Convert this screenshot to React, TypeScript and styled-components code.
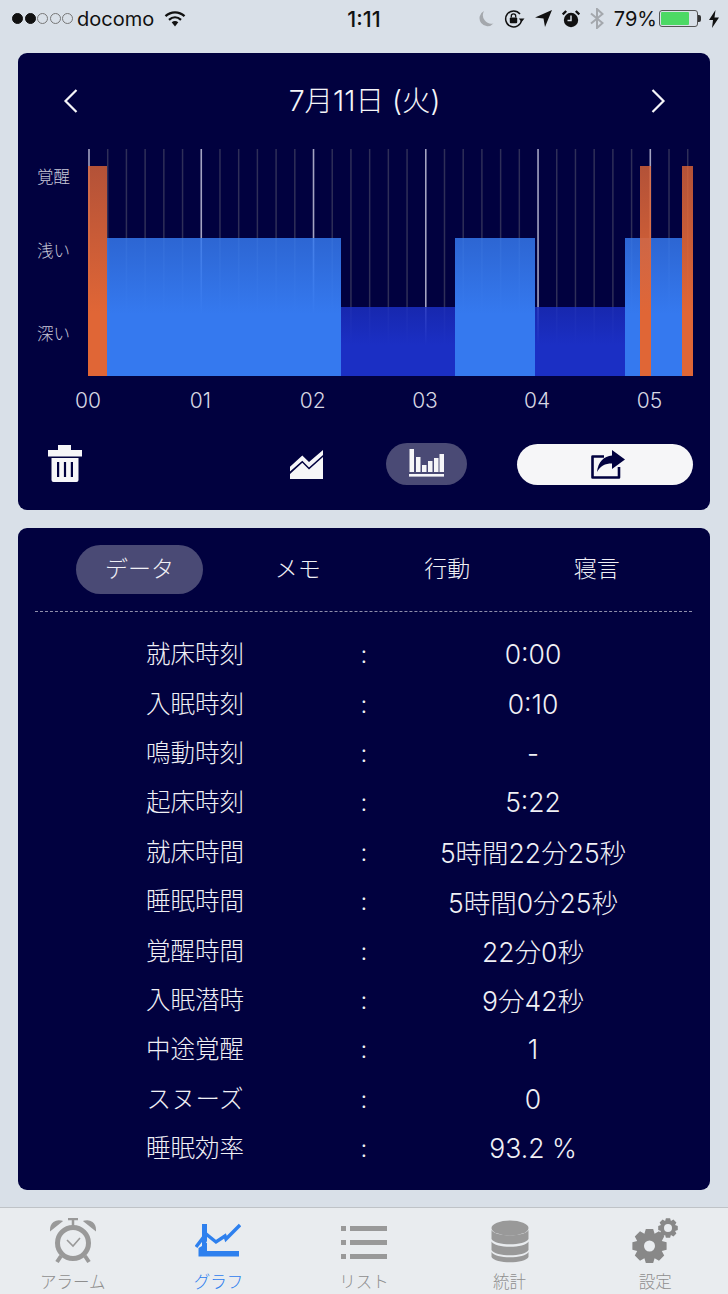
import React from 'react'
import styled, { createGlobalStyle } from 'styled-components'

const FONT = `Inter, "Noto Sans CJK JP", sans-serif`

const HOUR_X = [88, 200.3, 312.6, 425, 537, 649.5]
const STEP = 18.71

const SEGMENTS = [
  { x0: 107, x1: 341, stage: 'light' },
  { x0: 341, x1: 455, stage: 'deep' },
  { x0: 455, x1: 535, stage: 'light' },
  { x0: 535, x1: 625, stage: 'deep' },
  { x0: 625, x1: 682, stage: 'light' },
  { x0: 88, x1: 107, stage: 'awake' },
  { x0: 640, x1: 651, stage: 'awake' },
  { x0: 682, x1: 693, stage: 'awake' },
]

const STAGE_TOP: Record<string, number> = { awake: 166, light: 238, deep: 307 }

const ROWS = [
  ['就床時刻', '0:00'],
  ['入眠時刻', '0:10'],
  ['鳴動時刻', '-'],
  ['起床時刻', '5:22'],
  ['就床時間', '5時間22分25秒'],
  ['睡眠時間', '5時間0分25秒'],
  ['覚醒時間', '22分0秒'],
  ['入眠潜時', '9分42秒'],
  ['中途覚醒', '1'],
  ['スヌーズ', '0'],
  ['睡眠効率', '93.2 %'],
]

const gearPath = (cx: number, cy: number, r: number, teeth: number) => {
  const pts: string[] = []
  const outer = r
  const inner = r * 0.76
  const slice = (Math.PI * 2) / teeth
  for (let i = 0; i < teeth; i++) {
    const a = i * slice - Math.PI / 2
    const offsets: [number, number][] = [
      [-0.5, inner],
      [-0.27, outer],
      [0.27, outer],
      [0.5, inner],
    ]
    offsets.forEach(([o, rad]) => {
      const t = a + o * slice
      pts.push(`${(cx + Math.cos(t) * rad).toFixed(2)} ${(cy + Math.sin(t) * rad).toFixed(2)}`)
    })
  }
  return `M${pts.join('L')}Z`
}

const SleepChart = () => {
  const ticks = Array.from({ length: 33 }, (_, i) => i)
  return (
    <ChartSvg viewBox="18 140 692 280">
      <defs>
        <linearGradient id="light" x1="0" y1="0" x2="0" y2="1">
          <stop offset="0" stopColor="#3579ef" stopOpacity="0.84" />
          <stop offset="0.55" stopColor="#3579ef" />
        </linearGradient>
        <linearGradient id="deep" x1="0" y1="0" x2="0" y2="1">
          <stop offset="0" stopColor="#1b2fc4" stopOpacity="0.84" />
          <stop offset="0.55" stopColor="#1b2fc4" />
        </linearGradient>
        <linearGradient id="awake" x1="0" y1="0" x2="0" y2="1">
          <stop offset="0" stopColor="#e06636" stopOpacity="0.8" />
          <stop offset="0.7" stopColor="#e06636" />
        </linearGradient>
      </defs>
      {ticks.map(i => {
        const x = 89 + i * STEP
        const major = i % 6 === 0
        return (
          <line
            key={i}
            x1={x}
            x2={x}
            y1={149}
            y2={376}
            stroke={major ? '#a4a4c2' : '#2f2f58'}
            strokeWidth={major ? 1.6 : 1.5}
          />
        )
      })}
      {SEGMENTS.map(s => (
        <rect
          key={s.x0}
          x={s.x0}
          y={STAGE_TOP[s.stage]}
          width={s.x1 - s.x0}
          height={376 - STAGE_TOP[s.stage]}
          fill={`url(#${s.stage})`}
        />
      ))}
      <ChartLabel x={53.5} y={183}>覚醒</ChartLabel>
      <ChartLabel x={53.5} y={257}>浅い</ChartLabel>
      <ChartLabel x={53.5} y={340}>深い</ChartLabel>
      {HOUR_X.map((x, i) => (
        <HourLabel key={x} x={x} y={408}>{`0${i}`}</HourLabel>
      ))}
    </ChartSvg>
  )
}

const App = () => {
  return (
    <Page>
      <GlobalStyle />

      {/* Status bar */}
      <StatusBar>
        <StatusLeft>
          <Signal>
            {[true, true, false, false, false].map((on, i) => (
              <Dot key={i} $on={on} />
            ))}
          </Signal>
          <Carrier>docomo</Carrier>
          <svg width="22" height="17" viewBox="0 0 22 17">
            <path d="M1.5 6.2C7 1 15 1 20.5 6.2" fill="none" stroke="#111" strokeWidth="2.3" />
            <path d="M5 9.8C8.6 6.6 13.4 6.6 17 9.8" fill="none" stroke="#111" strokeWidth="2.3" />
            <path d="M7.7 12.3C9.7 10.6 12.3 10.6 14.3 12.3L11 16.5Z" fill="#111" />
          </svg>
        </StatusLeft>
        <Clock>1:11</Clock>
        <StatusRight>
          <svg width="17" height="18" viewBox="0 0 17 18">
            <path d="M7 1A8 8 0 1 0 16.5 13.5A8.6 8.6 0 0 1 7 1Z" fill="#a4a8ad" />
          </svg>
          <svg width="21" height="20" viewBox="0 0 21 20">
            <path d="M17.6 11A8 8 0 1 1 16 5" fill="none" stroke="#111" strokeWidth="1.5" />
            <path d="M20.5 9.5L17.6 13L14.8 9.5Z" fill="#111" />
            <rect x="5.8" y="8.5" width="7.4" height="5.8" rx="1" fill="#111" />
            <path d="M7.3 8.5V7A2.2 2.2 0 0 1 11.7 7V8.5" fill="none" stroke="#111" strokeWidth="1.3" />
          </svg>
          <svg width="17" height="17" viewBox="0 0 17 17">
            <path d="M17 0L10 17L8.5 8.5L0 7.5Z" fill="#111" />
          </svg>
          <svg width="18" height="18" viewBox="0 0 18 18">
            <circle cx="9" cy="10" r="7.2" fill="#111" />
            <path d="M0.7 4.5L4.2 1M13.8 1L17.3 4.5" stroke="#111" strokeWidth="2.4" />
            <path d="M9 5.5V10.5H5.5" fill="none" stroke="#d9e0e8" strokeWidth="1.5" />
          </svg>
          <svg width="14" height="21" viewBox="0 0 14 21">
            <path d="M1 5.5L12.5 15L7 20V1L12.5 6L1 15.5" fill="none" stroke="#a4a8ad" strokeWidth="2" />
          </svg>
          <Percent>79%</Percent>
          <Battery>
            <BatteryFill />
          </Battery>
          <svg width="10" height="18" viewBox="0 0 10 18">
            <path d="M6.5 0L0 10H4L3 18L10 7.5H5.5Z" fill="#111" />
          </svg>
        </StatusRight>
      </StatusBar>

      <Content>
        {/* Graph */}
        <Card>
          <DateHeader>
            <svg width="16" height="26" viewBox="0 0 16 26">
              <path d="M13.5 2L2.5 13L13.5 24" fill="none" stroke="#f5f5f8" strokeWidth="2.2" />
            </svg>
            <DateTitle>7月11日 (火)</DateTitle>
            <svg width="16" height="26" viewBox="0 0 16 26">
              <path d="M2.5 2L13.5 13L2.5 24" fill="none" stroke="#f5f5f8" strokeWidth="2.2" />
            </svg>
          </DateHeader>

          <SleepChart />

          <Toolbar>
            <TrashButton>
              <svg width="34" height="37" viewBox="0 0 34 37">
                <path d="M10 0H23V5H34V11.5H0V5H10Z" fill="#f6f6f8" />
                <path
                  fillRule="evenodd"
                  d="M3.5 13H30.5V35A2 2 0 0 1 28.5 37H5.5A2 2 0 0 1 3.5 35ZM9 17V32H11.2V17ZM15.9 17V32H18.1V17ZM22.8 17V32H25V17Z"
                  fill="#f6f6f8"
                />
              </svg>
            </TrashButton>
            <LineButton>
              <svg width="33" height="29" viewBox="0 0 33 29">
                <path d="M0 16.8L12.3 5.5L19 12L33 0V5L19 17.4L12.3 10.8L0 21.6Z" fill="#f6f6f8" />
                <path d="M0 24L12.3 12.8L19 19.5L33 7V29H0Z" fill="#f6f6f8" />
              </svg>
            </LineButton>
            <BarsButton>
              <svg width="35" height="30" viewBox="0 0 35 30">
                <path d="M0.5 0H5V23H0.5ZM7 8H11.5V23H7ZM13 16H17.5V23H13ZM19 12H23.5V23H19ZM25 9H29.5V23H25ZM30.5 5H35V23H30.5Z" fill="#f6f6f8" />
                <rect x="0" y="25" width="35" height="2.6" fill="#f6f6f8" />
              </svg>
            </BarsButton>
            <ShareButton>
              <svg width="34" height="29" viewBox="0 0 34 29">
                <path d="M13 6.5H1.5V27.5H28V17" fill="none" stroke="#01013f" strokeWidth="2.6" strokeLinejoin="round" />
                <path d="M21 0L34 9.5L21 19V13.5C14 13.5 9 16 6 22C7 12 13 6 21 5.5Z" fill="#01013f" />
              </svg>
            </ShareButton>
          </Toolbar>
        </Card>

        {/* Data */}
        <DataCard>
          <Tabs>
            <Tab $active>データ</Tab>
            <Tab>メモ</Tab>
            <Tab>行動</Tab>
            <Tab>寝言</Tab>
          </Tabs>
          <Divider />
          <DataTable>
            {ROWS.map(([label, value]) => (
              <DataRow key={label}>
                <RowLabel>{label}</RowLabel>
                <span>:</span>
                <RowValue>{value}</RowValue>
              </DataRow>
            ))}
          </DataTable>
        </DataCard>
      </Content>

      {/* Tab bar */}
      <TabBar>
        <TabItem>
          <svg width="46" height="46" viewBox="0 0 46 46">
            <circle cx="23" cy="25" r="15.5" fill="none" stroke="#999" strokeWidth="5" />
            <path d="M1 11.5C1 6 6 2 11 3.5ZM45 11.5C45 6 40 2 35 3.5Z" fill="#999" stroke="#999" strokeWidth="2" />
            <path d="M18 1H28M23 1V8" stroke="#999" strokeWidth="2.5" />
            <path d="M11 38L7 44M35 38L39 44" stroke="#999" strokeWidth="4" />
            <path d="M17 22L23 28L30 20" fill="none" stroke="#999" strokeWidth="1.6" />
          </svg>
          <TabLabel>アラーム</TabLabel>
        </TabItem>
        <TabItem $active>
          <svg width="46" height="46" viewBox="0 0 46 46">
            <path d="M3.5 30L7 28V6H12V23L11 25H12V33H44V38.5H3.5Z" fill="#2e80ee" />
            <path d="M1 29L11 16L21 24L30 18L31 21L45 7" fill="none" stroke="#2e80ee" strokeWidth="3.4" />
          </svg>
          <TabLabel>グラフ</TabLabel>
        </TabItem>
        <TabItem>
          <svg width="46" height="46" viewBox="0 0 46 46">
            <path d="M0 8H5V13H0ZM9 8H46V13H9ZM0 22H5V27H0ZM9 22H46V27H9ZM0 36H5V41H0ZM9 36H46V41H9Z" fill="#999" />
          </svg>
          <TabLabel>リスト</TabLabel>
        </TabItem>
        <TabItem>
          <svg width="46" height="46" viewBox="0 0 46 46">
            <ellipse cx="23" cy="10" rx="18.5" ry="7.5" fill="#999" />
            <path d="M4.5 12C8 19 38 19 41.500 12V21C38 28 8 28 4.5 21Z" fill="#999" />
            <path d="M4.5 23.500C8 30.500 38 30.500 41.500 23.500V32C38 39 8 39 4.5 32Z" fill="#999" />
            <path d="M4.500 34C8 41 38 41 41.500 34V39C38 46 8 46 4.500 39Z" fill="#999" />
          </svg>
          <TabLabel>統計</TabLabel>
        </TabItem>
        <TabItem>
          <svg width="46" height="46" viewBox="0 0 46 46">
            <path fillRule="evenodd" d={`${gearPath(17.5, 28, 17.5, 8)}M17.5 22.500A5.500 5.500 0 1 0 17.500 33.500A5.500 5.500 0 1 0 17.500 22.500Z`} fill="#888" />
            <path fillRule="evenodd" d={`${gearPath(36, 10, 10, 8)}M36 6A4 4 0 1 0 36 14A4 4 0 1 0 36 6Z`} fill="#888" />
          </svg>
          <TabLabel>設定</TabLabel>
        </TabItem>
      </TabBar>
    </Page>
  )
}

export default App

const GlobalStyle = createGlobalStyle`
  html, body {
    margin: 0;
    padding: 0;
    background: #d9e0e8;
    font-family: ${FONT};
  }
`

const Page = styled.div`
  width: 728px;
  height: 1294px;
  display: flex;
  flex-direction: column;
  overflow: hidden;
  background: #d9e0e8;
`

const StatusBar = styled.div`
  height: 37px;
  flex: none;
  display: grid;
  grid-template-columns: 1fr auto 1fr;
  align-items: center;
  color: #111;
  font-size: 20px;
`

const StatusLeft = styled.div`
  display: flex;
  align-items: center;
  padding-left: 12px;
`

const Signal = styled.div`
  display: flex;
  gap: 1.5px;
  margin-right: 4px;
`

const Dot = styled.span<{ $on?: boolean }>`
  width: 11px;
  height: 11px;
  box-sizing: border-box;
  border-radius: 50%;
  border: 1px solid ${p => (p.$on ? '#111' : '#777')};
  background: ${p => (p.$on ? '#111' : 'transparent')};
`

const Carrier = styled.span`
  margin-right: 10px;
`

const Clock = styled.span`
  font-size: 21.5px;
  font-weight: 500;
`

const StatusRight = styled.div`
  display: flex;
  align-items: center;
  justify-content: flex-end;
  gap: 10px;
  padding-right: 9px;
`

const Percent = styled.span`
  margin-right: -8px;
`

const Battery = styled.div`
  position: relative;
  width: 39px;
  height: 17px;
  margin-right: 1px;
  box-sizing: border-box;
  border: 1px solid #555;
  border-radius: 3px;
  padding: 1px;

  &::after {
    content: '';
    position: absolute;
    right: -4px;
    top: 4px;
    width: 3px;
    height: 7px;
    background: #333;
    border-radius: 0 2px 2px 0;
  }
`

const BatteryFill = styled.div`
  width: 79%;
  height: 100%;
  background: #4cd964;
  border-radius: 1px;
`

const Content = styled.div`
  flex: 1;
  display: flex;
  flex-direction: column;
  gap: 18px;
  padding: 16px 18px 0;
`

const Card = styled.section`
  background: #01013f;
  border-radius: 9px;
  height: 457px;
  box-sizing: border-box;
`

const DataCard = styled(Card)`
  height: 662px;
  padding-top: 17px;
`

const DateHeader = styled.div`
  height: 87px;
  padding: 8px 44px 0 45px;
  box-sizing: border-box;
  display: flex;
  align-items: center;
  justify-content: space-between;
`

const DateTitle = styled.h1`
  margin: 0 0 4px;
  font-size: 28.5px;
  font-weight: 300;
  color: #f5f5f8;
`

const ChartSvg = styled.svg`
  display: block;
  width: 692px;
  height: 280px;
`

const ChartLabel = styled.text`
  fill: #c9c9d9;
  font-size: 16.5px;
  font-weight: 300;
  text-anchor: middle;
  font-family: ${FONT};
`

const HourLabel = styled.text`
  fill: #d8d8e4;
  font-size: 21px;
  font-weight: 300;
  text-anchor: middle;
  font-family: ${FONT};
`

const Toolbar = styled.div`
  display: flex;
  align-items: center;
  padding: 23px 0 0 30px;
`

const TrashButton = styled.div`
  width: 34px;
  height: 37px;
  margin-top: -2px;
  display: flex;
`

const LineButton = styled.div`
  margin-left: 207px;
  width: 34px;
  display: flex;
  justify-content: center;
`

const BarsButton = styled.div`
  margin-left: 63px;
  width: 81px;
  height: 42px;
  border-radius: 21px;
  background: #4a4a75;
  display: flex;
  align-items: center;
  justify-content: center;
`

const ShareButton = styled.div`
  margin-left: 50px;
  width: 176px;
  height: 41px;
  box-sizing: border-box;
  padding-left: 6px;
  border-radius: 21px;
  background: #f6f6f8;
  display: flex;
  align-items: center;
  justify-content: center;
`

const Tabs = styled.div`
  display: grid;
  grid-template-columns: 147px repeat(3, 149.5px);
  padding: 0 0 0 58px;
  height: 49px;
  align-items: center;
`

const Tab = styled.div<{ $active?: boolean }>`
  width: ${p => (p.$active ? '127px' : '100%')};
  height: 49px;
  line-height: 49px;
  text-align: center;
  border-radius: 25px;
  font-size: 23px;
  font-weight: 300;
  color: #f0f0f5;
  background: ${p => (p.$active ? '#4a4a75' : 'transparent')};
`

const Divider = styled.hr`
  margin: 17px 18px 0 17px;
  border: 0;
  border-top: 1px dashed #8f8fab;
`

const DataTable = styled.div`
  display: flex;
  flex-direction: column;
  padding: 18px 28px 0;
`

const DataRow = styled.div`
  display: grid;
  grid-template-columns: 1fr 40px 1fr;
  height: 49.4px;
  align-items: center;
  justify-items: center;
  font-size: 24px;
  font-weight: 300;
  color: #f0f0f5;
`

const RowLabel = styled.span`
  font-size: 24.5px;
  margin-top: -4px;
`

const RowValue = styled.span`
  font-size: 26.5px;
  margin-top: -1px;
`

const TabBar = styled.nav`
  height: 87px;
  flex: none;
  margin-top: 17px;
  box-sizing: border-box;
  border-top: 1px solid #bfc3c7;
  background: #e9ecef;
  display: grid;
  grid-template-columns: repeat(5, 1fr);
`

const TabItem = styled.div<{ $active?: boolean }>`
  display: flex;
  flex-direction: column;
  align-items: center;
  padding-top: 10px;
  color: ${p => (p.$active ? '#2e80ee' : '#8e8e8e')};
`

const TabLabel = styled.span`
  font-size: 16.5px;
  font-weight: 300;
  margin-top: 5px;
`
